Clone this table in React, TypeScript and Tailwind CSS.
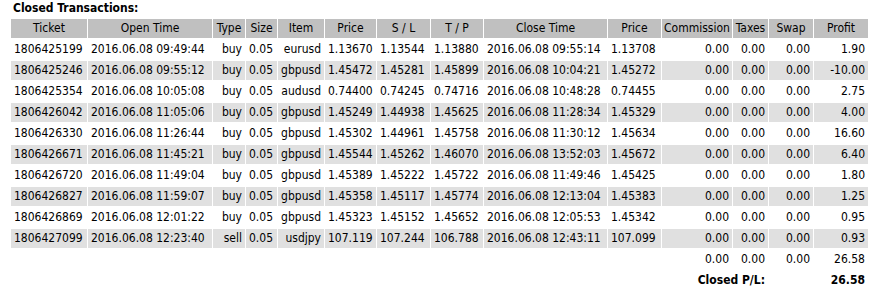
const rows = [
  ["1806425199", "2016.06.08 09:49:44", "buy", "eurusd", "1.13670", "1.13544", "1.13880", "2016.06.08 09:55:14", "1.13708", "1.90"],
  ["1806425246", "2016.06.08 09:55:12", "buy", "gbpusd", "1.45472", "1.45281", "1.45899", "2016.06.08 10:04:21", "1.45272", "-10.00"],
  ["1806425354", "2016.06.08 10:05:08", "buy", "audusd", "0.74400", "0.74245", "0.74716", "2016.06.08 10:48:28", "0.74455", "2.75"],
  ["1806426042", "2016.06.08 11:05:06", "buy", "gbpusd", "1.45249", "1.44938", "1.45625", "2016.06.08 11:28:34", "1.45329", "4.00"],
  ["1806426330", "2016.06.08 11:26:44", "buy", "gbpusd", "1.45302", "1.44961", "1.45758", "2016.06.08 11:30:12", "1.45634", "16.60"],
  ["1806426671", "2016.06.08 11:45:21", "buy", "gbpusd", "1.45544", "1.45262", "1.46070", "2016.06.08 13:52:03", "1.45672", "6.40"],
  ["1806426720", "2016.06.08 11:49:04", "buy", "gbpusd", "1.45389", "1.45222", "1.45722", "2016.06.08 11:49:46", "1.45425", "1.80"],
  ["1806426827", "2016.06.08 11:59:07", "buy", "gbpusd", "1.45358", "1.45117", "1.45774", "2016.06.08 12:13:04", "1.45383", "1.25"],
  ["1806426869", "2016.06.08 12:01:22", "buy", "gbpusd", "1.45323", "1.45152", "1.45652", "2016.06.08 12:05:53", "1.45342", "0.95"],
  ["1806427099", "2016.06.08 12:23:40", "sell", "usdjpy", "107.119", "107.244", "106.788", "2016.06.08 12:43:11", "107.099", "0.93"],
];

const headers = ["Ticket", "Open Time", "Type", "Size", "Item", "Price", "S / L", "T / P", "Close Time", "Price", "Commission", "Taxes", "Swap", "Profit"];

export default function App() {
  return (
    <div className="bg-white text-black h-[294px] w-[878px] pl-[10px] pt-[1px] text-[12px] leading-[15px]" style={{ fontFamily: '"DejaVu Sans Condensed", "DejaVu Sans", sans-serif' }}>
      <div className="font-bold pl-[3px] h-[16px]">Closed Transactions:</div>
      <table className="table-fixed border-separate border-spacing-x-[1px] border-spacing-y-[2px] w-[859px]">
        <colgroup>
          <col className="w-[76px]" />
          <col className="w-[124px]" />
          <col className="w-[32px]" />
          <col className="w-[31px]" />
          <col className="w-[46px]" />
          <col className="w-[51px]" />
          <col className="w-[53px]" />
          <col className="w-[52px]" />
          <col className="w-[123px]" />
          <col className="w-[53px]" />
          <col className="w-[70px]" />
          <col className="w-[35px]" />
          <col className="w-[44px]" />
          <col className="w-[54px]" />
        </colgroup>
        <thead>
          <tr className="bg-[#c0c0c0] h-[19px]">
            {headers.map((h, i) => (
              <td key={i} className="text-center px-0 whitespace-nowrap">{h}</td>
            ))}
          </tr>
        </thead>
        <tbody>
          {rows.map((r, i) => (
            <tr key={r[0]} className={i % 2 === 1 ? "bg-[#e0e0e0] h-[19px]" : "h-[19px]"}>
              <td className="px-[3px] whitespace-nowrap">{r[0]}</td>
              <td className="px-[3px] whitespace-nowrap">{r[1]}</td>
              <td className="px-[3px] text-right">{r[2]}</td>
              <td className="px-[3px]">0.05</td>
              <td className="px-[3px] text-right">{r[3]}</td>
              <td className="px-[3px]">{r[4]}</td>
              <td className="px-[3px]">{r[5]}</td>
              <td className="px-[3px]">{r[6]}</td>
              <td className="px-[3px] whitespace-nowrap">{r[7]}</td>
              <td className="px-[3px]">{r[8]}</td>
              <td className="px-[3px] text-right">0.00</td>
              <td className="px-[3px] text-right">0.00</td>
              <td className="px-[3px] text-right">0.00</td>
              <td className="px-[3px] text-right">{r[9]}</td>
            </tr>
          ))}
          <tr className="h-[19px]">
            <td colSpan={10}></td>
            <td className="px-[3px] text-right">0.00</td>
            <td className="px-[3px] text-right">0.00</td>
            <td className="px-[3px] text-right">0.00</td>
            <td className="px-[3px] text-right">26.58</td>
          </tr>
          <tr className="h-[19px] font-bold">
            <td colSpan={10}></td>
            <td colSpan={2} className="px-[3px] text-right whitespace-nowrap">Closed P/L:</td>
            <td colSpan={2} className="px-[3px] text-right">26.58</td>
          </tr>
        </tbody>
      </table>
    </div>
  );
}
